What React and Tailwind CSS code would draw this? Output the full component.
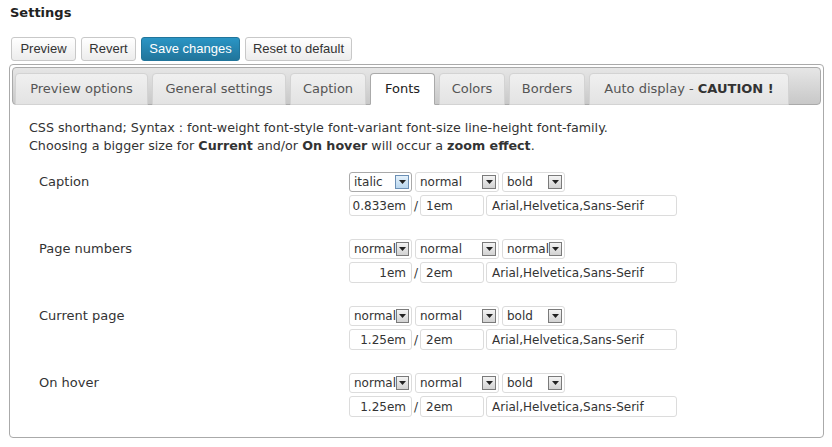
import { useState } from "react";

const tabs = [
  { label: "Preview options", w: "w-[133px]" },
  { label: "General settings", w: "w-[134px]" },
  { label: "Caption", w: "w-[76px]" },
  { label: "Fonts", w: "w-[65px]" },
  { label: "Colors", w: "w-[66px]" },
  { label: "Borders", w: "w-[76px]" },
];

const rows = [
  { label: "Caption", sel: ["italic", "normal", "bold"], size: "0.833em", lh: "1em", focus: true },
  { label: "Page numbers", sel: ["normal", "normal", "normal"], size: "1em", lh: "2em" },
  { label: "Current page", sel: ["normal", "normal", "bold"], size: "1.25em", lh: "2em" },
  { label: "On hover", sel: ["normal", "normal", "bold"], size: "1.25em", lh: "2em" },
];

function Arrow({ focus }) {
  return (
    <span
      className={`flex h-[14px] w-[14px] items-center justify-center border ${
        focus
          ? "border-[#6b8fb5] bg-gradient-to-b from-[#e4f1fb] to-[#b9d6ee]"
          : "border-[#7a7a7a] bg-gradient-to-b from-[#f4f4f4] to-[#d2d2d2]"
      }`}
    >
      <svg width="7" height="4" viewBox="0 0 7 4">
        <path d="M0 0h7L3.5 4z" fill="#222" />
      </svg>
    </span>
  );
}

function Select({ value, w, focus }) {
  return (
    <div
      className={`flex h-[20px] ${w} items-center justify-between rounded-[3px] border pl-[4px] pr-[2px] ${
        focus ? "border-[#a9a9a9]" : "border-[#dcdcdc]"
      }`}
    >
      <span>{value}</span>
      <Arrow focus={focus} />
    </div>
  );
}

function Field({ value, w, right }) {
  return (
    <div
      className={`flex h-[21px] ${w} items-center rounded-[3px] border border-[#dcdcdc] px-[5px] ${
        right ? "justify-end" : ""
      }`}
    >
      {value}
    </div>
  );
}

export default function App() {
  const [active, setActive] = useState(3);

  return (
    <div className="h-[447px] w-[832px] bg-white font-['DejaVu_Sans',Verdana,sans-serif] text-[#333]">
      <div className="px-[10px] pt-[4px] text-[13px] font-bold leading-[17px] text-[#222]">
        Settings
      </div>

      {/* buttons */}
      <div className="mt-[16px] flex gap-[5px] pl-[11px] font-['Liberation_Sans',Arial,sans-serif] text-[13px]">
        <button className="h-[24px] w-[65px] rounded-[3px] border border-[#c8c8c8] bg-gradient-to-b from-white to-[#ececec] text-[#333]">
          Preview
        </button>
        <button className="h-[24px] w-[55px] rounded-[3px] border border-[#c8c8c8] bg-gradient-to-b from-white to-[#ececec] text-[#333]">
          Revert
        </button>
        <button className="h-[24px] w-[99px] rounded-[3px] border border-[#21759b] bg-gradient-to-b from-[#2a95c5] to-[#21759b] text-white">
          Save changes
        </button>
        <button className="h-[24px] w-[107px] rounded-[3px] border border-[#c8c8c8] bg-gradient-to-b from-white to-[#ececec] text-[#333]">
          Reset to default
        </button>
      </div>

      {/* tabs panel */}
      <div className="ml-[9px] mt-[3px] h-[374px] w-[815px] rounded-[4px] border border-[#aaa] p-[2px]">
        <div className="flex h-[38px] items-end gap-[4px] rounded-[4px] border border-[#aaa] bg-gradient-to-b from-[#e6e6e6] to-[#c8c8c8] pl-[2px] text-[13px]">
          {tabs.map((t, i) => (
            <button
              key={t.label}
              onClick={() => setActive(i)}
              className={`-mb-px flex h-[32px] ${t.w} items-center justify-center rounded-t-[4px] border ${
                active === i
                  ? "border-[#aaa] border-b-white bg-white text-[#212121]"
                  : "border-[#d3d3d3] bg-gradient-to-b from-[#f0f0f0] to-[#e3e3e3] text-[#555]"
              }`}
            >
              {t.label}
            </button>
          ))}
          <button
            onClick={() => setActive(6)}
            className={`-mb-px flex h-[32px] w-[200px] items-center justify-center rounded-t-[4px] border ${
              active === 6
                ? "border-[#aaa] border-b-white bg-white text-[#212121]"
                : "border-[#d3d3d3] bg-gradient-to-b from-[#f0f0f0] to-[#e3e3e3] text-[#555]"
            }`}
          >
            Auto display -&nbsp;<b className="text-[#333]">CAUTION !</b>
          </button>
        </div>

        <div className="pl-[17px] pt-[14px] text-[12px] leading-[18px]">
          <div className="text-[12.7px]">
            <p>CSS shorthand; Syntax : font-weight font-style font-variant font-size line-height font-family.</p>
            <p>
              Choosing a bigger size for <b>Current</b> and/or <b>On hover</b> will occur a{" "}
              <b>zoom effect</b>.
            </p>
          </div>

          <div className="mt-[17px] flex flex-col gap-[23px]">
            {rows.map((r) => (
              <div key={r.label} className="flex">
                <div className="flex h-[20px] w-[320px] items-center pl-[10px] text-[13px]">
                  {r.label}
                </div>
                <div className="flex flex-col gap-[3px]">
                  <div className="flex gap-[3px]">
                    <Select value={r.sel[0]} w="w-[63px]" focus={r.focus} />
                    <Select value={r.sel[1]} w="w-[84px]" />
                    <Select value={r.sel[2]} w="w-[63px]" />
                  </div>
                  <div className="flex items-center">
                    <Field value={r.size} w="w-[63px]" right />
                    <span className="w-[8px] text-center">/</span>
                    <Field value={r.lh} w="w-[64px]" />
                    <span className="w-[2px]" />
                    <Field value="Arial,Helvetica,Sans-Serif" w="w-[191px]" />
                  </div>
                </div>
              </div>
            ))}
          </div>
        </div>
      </div>
    </div>
  );
}
